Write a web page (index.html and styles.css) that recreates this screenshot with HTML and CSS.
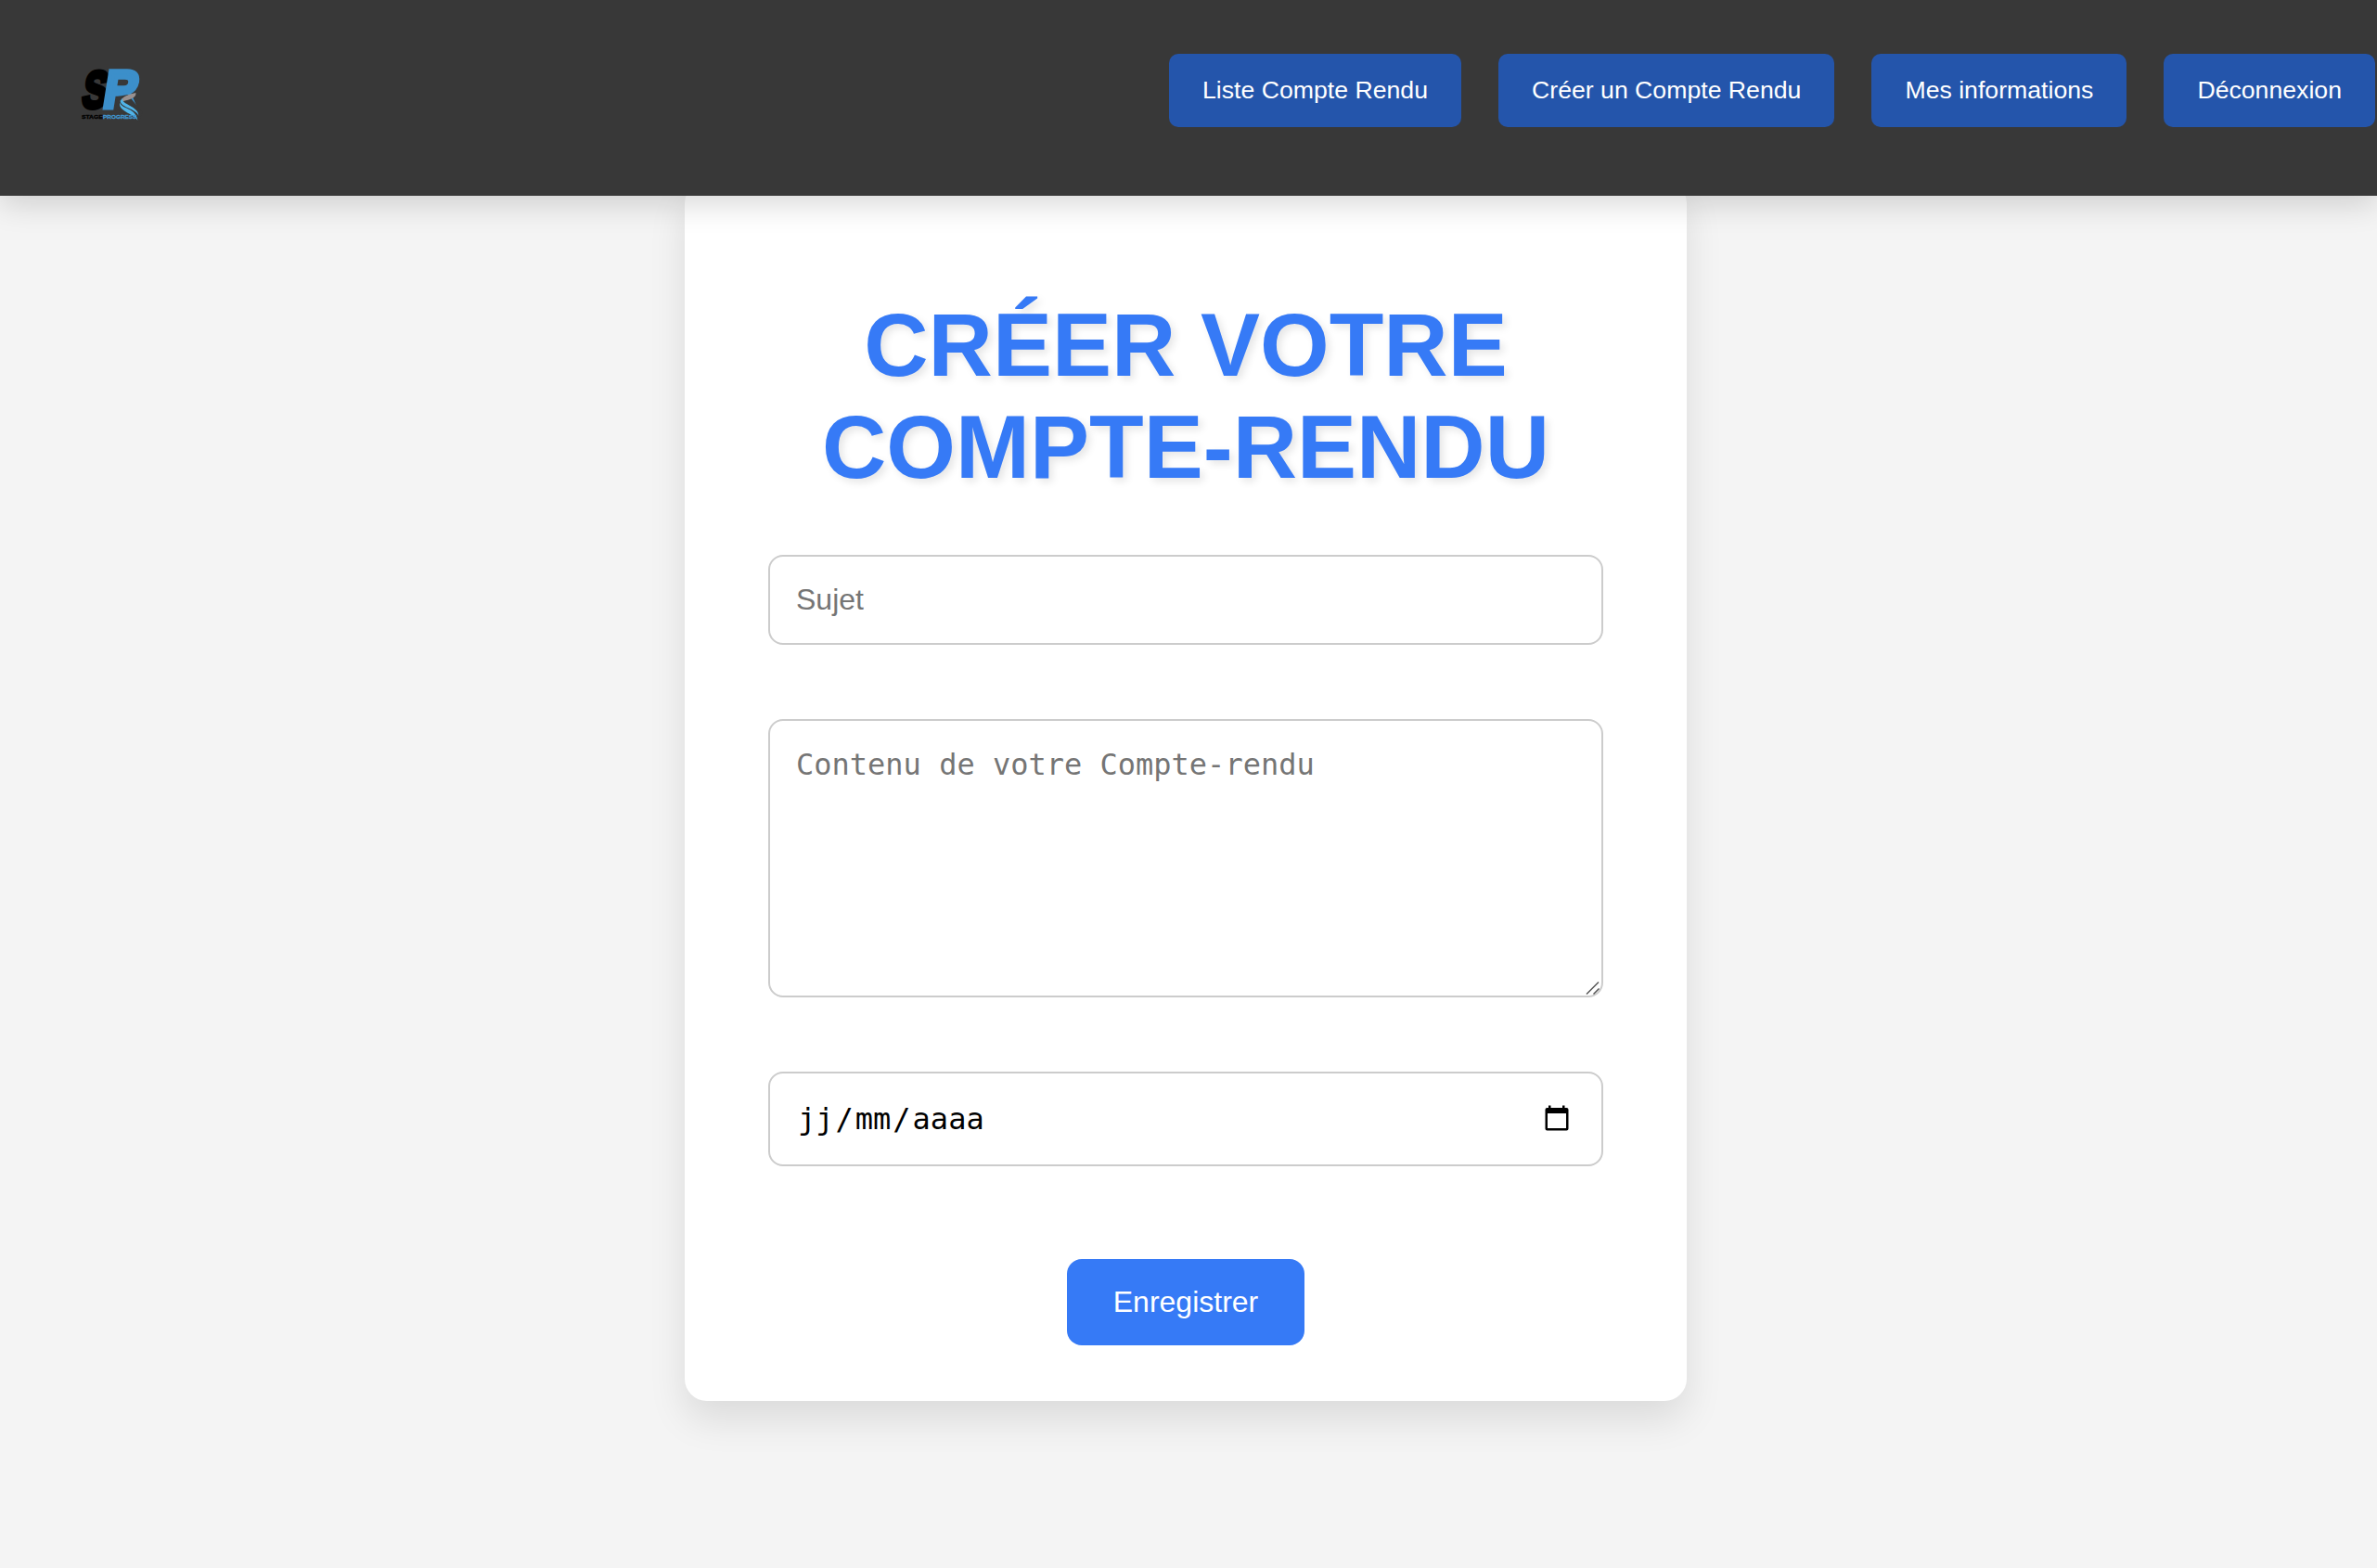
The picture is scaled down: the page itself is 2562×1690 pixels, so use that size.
FILE: index.html
```html
<!DOCTYPE html>
<html lang="fr">
<head>
<meta charset="utf-8">
<title>Créer votre compte-rendu</title>
<link rel="stylesheet" href="styles.css">
</head>
<body>
<header class="header">
  <svg class="logo" viewBox="0 0 300 240" aria-label="Stage Progress">
    <text class="logo-s" transform="translate(51 168) skewX(-9) scale(.66 .93)" x="0" y="0">S</text>
    <text class="logo-r" transform="translate(119 168) skewX(-9) scale(.84 .95)" x="0" y="0">R</text>
    <path class="logo-cut" d="M170 132L204 126L250 184L240 212L206 190L172 176L164 178Z"/>
    <path class="logo-road" d="M229 120C232 136 214 140 184 149C176 140 196 127 229 120Z"/>
    <path class="logo-wave" d="M178 142C170 176 228 162 235 209C224 188 180 182 177 158Z"/>
    <path class="logo-wave" d="M186 137C180 158 240 163 238 194C229 170 180 168 179 146Z"/>
    <text class="logo-name" x="54" y="204" textLength="68" lengthAdjust="spacingAndGlyphs">STAGE</text>
    <text class="logo-name logo-name-blue" x="123" y="204" textLength="109" lengthAdjust="spacingAndGlyphs">PROGRESS</text>
  </svg>
  <nav class="nav">
    <a class="nav-link">Liste Compte Rendu</a>
    <a class="nav-link">Créer un Compte Rendu</a>
    <a class="nav-link">Mes informations</a>
    <a class="nav-link">Déconnexion</a>
  </nav>
</header>
<main class="page">
  <form class="card">
    <h1 class="title">CRÉER VOTRE COMPTE-RENDU</h1>
    <input class="field subject" type="text" placeholder="Sujet">
    <div class="content-wrap">
      <textarea class="field content" placeholder="Contenu de votre Compte-rendu"></textarea>
      <svg class="grip" viewBox="0 0 16 16"><path d="M1 14.5L14 1.5M8.5 14.5L14.5 8.5"/></svg>
    </div>
    <div class="field date">
      <div class="date-text"><span class="part">jj</span>/<span class="part">mm</span>/<span class="part">aaaa</span></div>
      <svg class="calendar" viewBox="0 0 26 28"><path fill-rule="evenodd" d="M4 0.5H6.5V3H19V0.5H21.5V3H23.5Q25.5 3 25.5 5V25.5Q25.5 27.5 23.5 27.5H2.5Q.5 27.5 .5 25.5V5Q.5 3 2.5 3H4ZM3 9V25H23V9Z"/></svg>
    </div>
    <button class="submit" type="button">Enregistrer</button>
  </form>
</main>
</body>
</html>
```
FILE: styles.css
```css
* {
  box-sizing: border-box;
}

body {
  margin: 0;
  min-height: 1690px;
  background: #f4f4f4;
  font-family: "Liberation Sans", Arial, sans-serif;
}

.header {
  position: relative;
  z-index: 1;
  display: flex;
  justify-content: space-between;
  align-items: flex-start;
  height: 211px;
  padding: 58px 2px 0 70px;
  background: #383838;
  box-shadow: 0 8px 32px rgba(0, 0, 0, 0.16);
}

.logo {
  width: 100px;
  height: 80px;
  margin-top: 2px;
}

.logo-s,
.logo-r {
  font-weight: bold;
  font-size: 180px;
  stroke-width: 16px;
}

.logo-s {
  fill: #000;
  stroke: #000;
}

.logo-r {
  fill: #3c8fca;
  stroke: #3c8fca;
}

.logo-cut {
  fill: #383838;
}

.logo-road {
  fill: #99908f;
}

.logo-wave {
  fill: #50b4e8;
}

.logo-name {
  font-weight: bold;
  font-size: 17px;
  fill: #000;
  stroke: #000;
  stroke-width: 1px;
}

.logo-name-blue {
  fill: #4095cf;
  stroke: #4095cf;
}

.nav {
  display: flex;
  gap: 40px;
}

.nav-link {
  height: 79px;
  padding: 0 36px;
  border-radius: 10px;
  background: #2455ab;
  color: #fff;
  font-size: 26.667px;
  line-height: 78px;
  white-space: nowrap;
}

.page {
  display: flex;
  justify-content: center;
  padding-right: 6px;
}

.card {
  display: flex;
  flex-direction: column;
  align-items: center;
  width: 1080px;
  height: 1315px;
  margin-top: -16px;
  padding: 122px 90px 60px;
  border-radius: 24px;
  background: #fff;
  box-shadow: 0 20px 40px rgba(0, 0, 0, 0.1);
}

.title {
  margin: 0 0 61px;
  color: #367af6;
  font-size: 96px;
  font-weight: bold;
  line-height: 110px;
  text-align: center;
  text-shadow: 4px 4px 8px rgba(0, 0, 0, 0.1);
}

.field {
  display: block;
  width: 100%;
  margin: 0;
  padding: 28px;
  border: 2px solid #ccc;
  border-radius: 16px;
  background: #fff;
  font-size: 32px;
}

.field::placeholder {
  color: #757575;
  opacity: 1;
}

.subject {
  height: 97px;
  font-family: "Liberation Sans", Arial, sans-serif;
}

.content-wrap {
  position: relative;
  width: 100%;
  margin: 80px 0;
}

.content {
  height: 300px;
  resize: none;
  font-family: "DejaVu Sans Mono", monospace;
}

.grip {
  position: absolute;
  right: 3px;
  bottom: 2px;
  width: 16px;
  height: 16px;
  fill: none;
  stroke: #555;
  stroke-width: 1.5px;
}

.date {
  display: flex;
  align-items: center;
  justify-content: space-between;
  height: 102px;
  padding: 0 35px 0 28px;
  color: #000;
  font-family: "DejaVu Sans Mono", monospace;
}

.part {
  padding: 0 2px;
}

.calendar {
  width: 26px;
  height: 28px;
  margin-bottom: 2px;
}

.submit {
  width: 256px;
  height: 93px;
  margin-top: 100px;
  padding: 0;
  border: 0;
  border-radius: 16px;
  background: #367af6;
  color: #fff;
  font-family: "Liberation Sans", Arial, sans-serif;
  font-size: 32px;
}
```
